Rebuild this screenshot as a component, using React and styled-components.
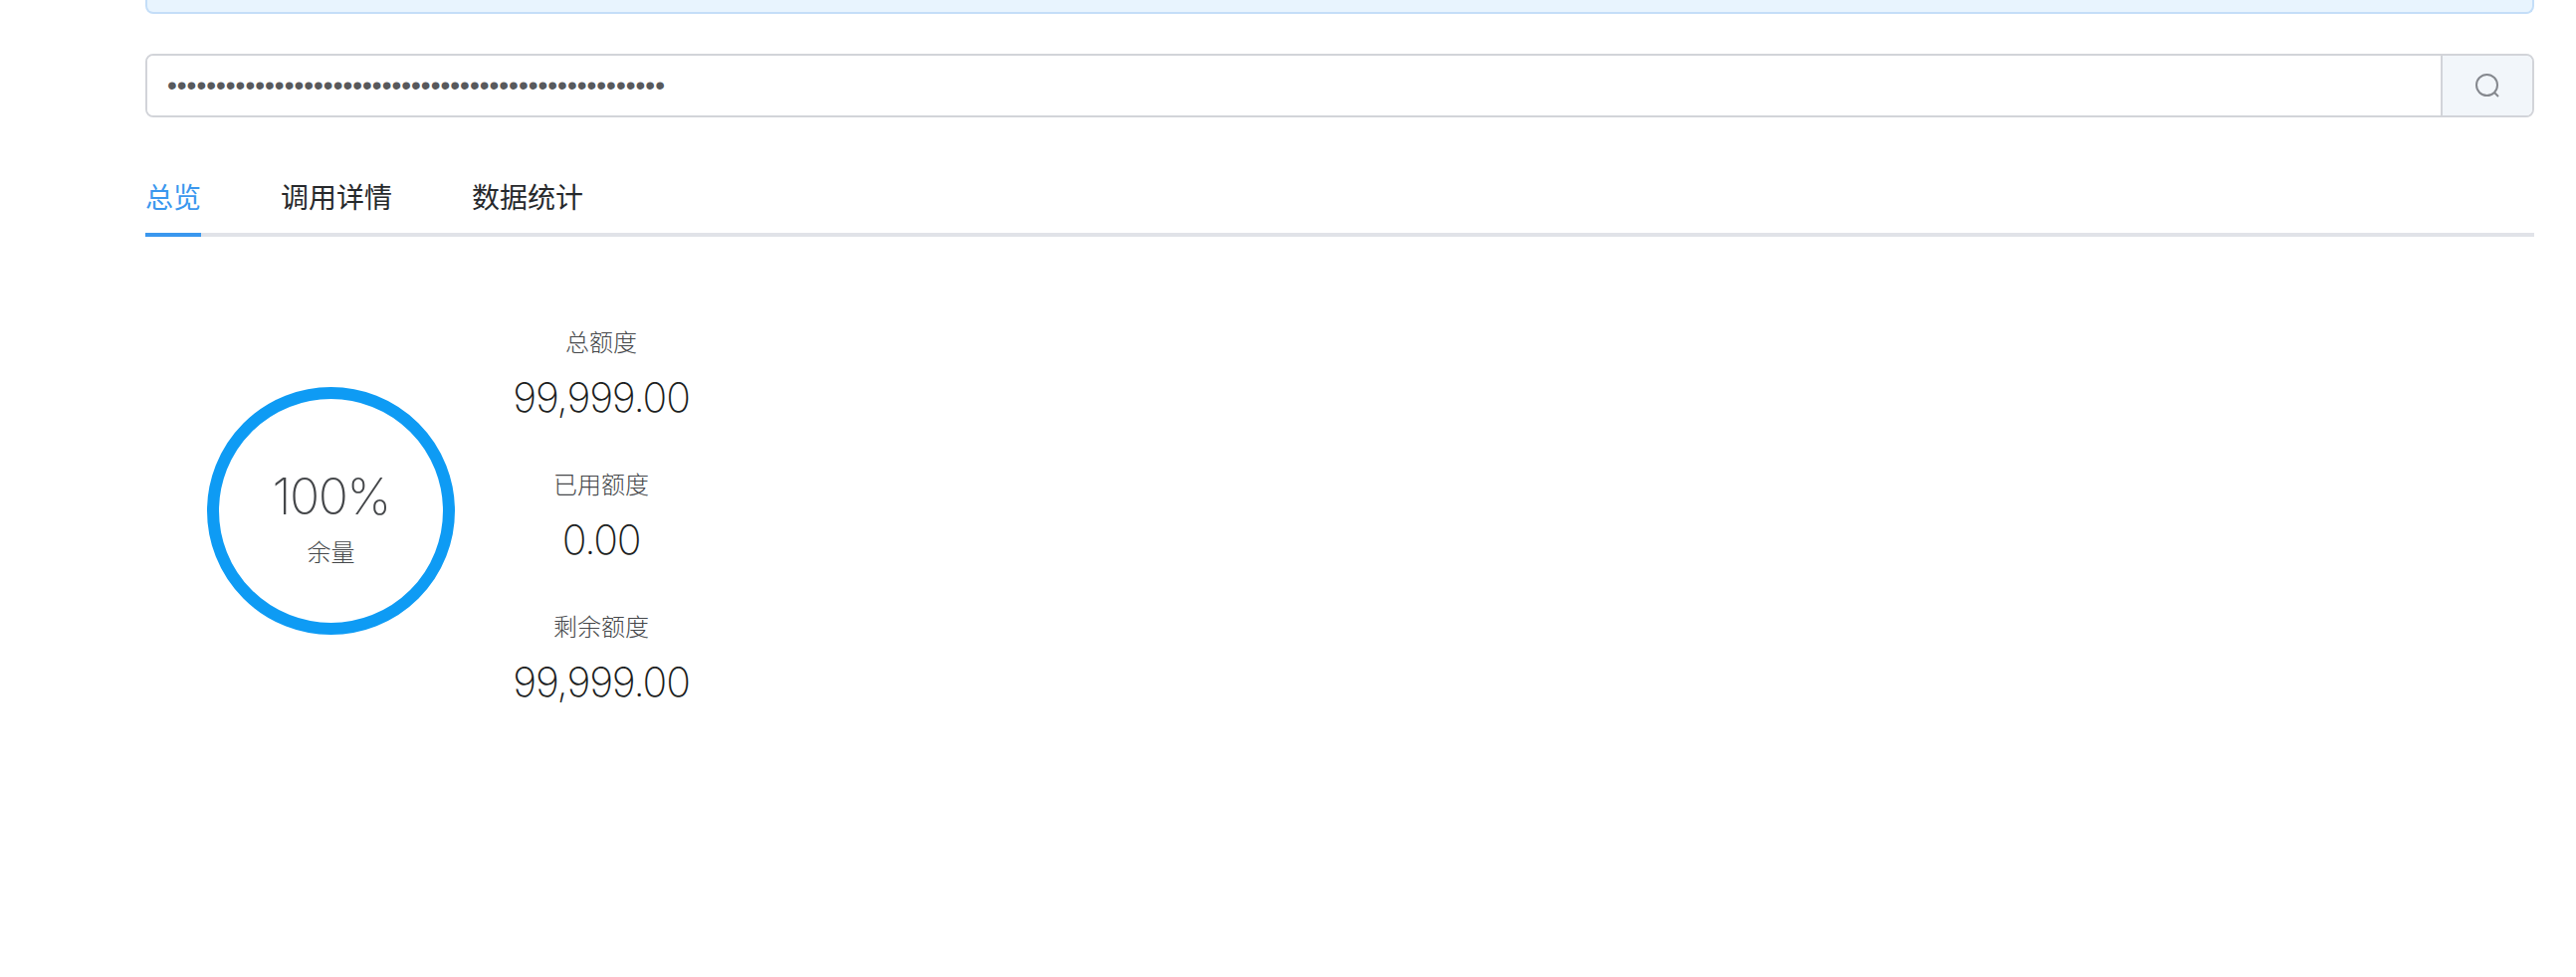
import React from "react";
import styled, { createGlobalStyle } from "styled-components";

const Global = createGlobalStyle`
  html, body { margin: 0; padding: 0; background: #fff; }
  body { font-family: Inter, "Noto Sans CJK SC", sans-serif; overflow: hidden; }
`;

const Page = styled.div`
  box-sizing: border-box;
  width: 2588px;
  height: 982px;
  padding: 0 42px 0 146px;
  display: flex;
  flex-direction: column;
`;

const Notice = styled.div`
  height: 14px;
  box-sizing: border-box;
  background: #e8f4fe;
  border: 2px solid #c4def8;
  border-top: none;
  border-radius: 0 0 8px 8px;
`;

const SearchBar = styled.div`
  margin-top: 40px;
  height: 64px;
  box-sizing: border-box;
  display: flex;
  border: 2px solid #d2d4d9;
  border-radius: 8px;
  overflow: hidden;
`;

const KeyInput = styled.input`
  flex: 1;
  min-width: 0;
  border: none;
  outline: none;
  padding: 0 20px;
  font-family: "Liberation Sans", sans-serif;
  font-size: 28px;
  color: #58595c;
  background: #fff;
`;

const SearchButton = styled.div`
  width: 90px;
  display: flex;
  align-items: center;
  justify-content: center;
  background: #f2f6fa;
  border-left: 2px solid #d2d4d9;
  color: #85888e;
`;

const TabBar = styled.div`
  margin-top: 50px;
  height: 70px;
  box-sizing: border-box;
  display: flex;
  gap: 80px;
  border-bottom: 4px solid #e1e3e8;
`;

const Tab = styled.div`
  position: relative;
  font-family: "Noto Sans CJK SC", sans-serif;
  font-size: 28px;
  font-weight: 400;
  line-height: 58px;
  color: ${(p) => (p.$active ? "#3a97ee" : "#26282b")};
  &::after {
    content: "";
    display: ${(p) => (p.$active ? "block" : "none")};
    position: absolute;
    left: 0;
    right: 0;
    bottom: -4px;
    height: 4px;
    background: #3a97ee;
  }
`;

const Overview = styled.div`
  display: flex;
  align-items: flex-start;
  padding: 85px 0 0 62px;
`;

const Gauge = styled.div`
  position: relative;
  margin-top: 66px;
  width: 249px;
  height: 249px;
  flex: none;
`;

const GaugeText = styled.div`
  position: absolute;
  inset: 0;
  padding-top: 12px;
  display: flex;
  flex-direction: column;
  align-items: center;
  justify-content: center;
`;

const Percent = styled.div`
  font-weight: 200;
  font-size: 50px;
  letter-spacing: -1.5px;
  line-height: 60px;
  color: #45474a;
`;

const GaugeLabel = styled.div`
  font-family: "Noto Sans CJK SC", sans-serif;
  font-weight: 300;
  font-size: 24px;
  line-height: 34px;
  margin-top: 8px;
  color: #45474a;
`;

const Stats = styled.div`
  margin-left: 50px;
  display: flex;
  flex-direction: column;
  gap: 31px;
`;

const Stat = styled.div`
  width: 194px;
  display: flex;
  flex-direction: column;
  align-items: center;
`;

const StatLabel = styled.div`
  font-family: "Noto Sans CJK SC", sans-serif;
  font-weight: 300;
  font-size: 24px;
  line-height: 40px;
  color: #45474a;
`;

const StatValue = styled.div`
  font-weight: 200;
  font-size: 41px;
  letter-spacing: -1.2px;
  line-height: 72px;
  color: #1c1e21;
`;

const stats = [
  ["总额度", "99,999.00"],
  ["已用额度", "0.00"],
  ["剩余额度", "99,999.00"],
];

export default function App() {
  return (
    <Page>
      <Global />
      <Notice />
      <SearchBar>
        <KeyInput type="password" readOnly value={"x".repeat(51)} />
        <SearchButton>
          <svg width="28" height="28" viewBox="0 0 28 28" fill="none" stroke="currentColor" strokeWidth="2">
            <circle cx="13.5" cy="13.5" r="10.5" />
            <path d="M21 21l4 4" />
          </svg>
        </SearchButton>
      </SearchBar>
      <TabBar>
        <Tab $active>总览</Tab>
        <Tab>调用详情</Tab>
        <Tab>数据统计</Tab>
      </TabBar>
      <Overview>
        <Gauge>
          <svg width="249" height="249" viewBox="0 0 249 249">
            <circle cx="124.5" cy="124.5" r="118.5" fill="none" stroke="#0e9bf4" strokeWidth="12" />
          </svg>
          <GaugeText>
            <Percent>100%</Percent>
            <GaugeLabel>余量</GaugeLabel>
          </GaugeText>
        </Gauge>
        <Stats>
          {stats.map(([label, value]) => (
            <Stat key={label}>
              <StatLabel>{label}</StatLabel>
              <StatValue>{value}</StatValue>
            </Stat>
          ))}
        </Stats>
      </Overview>
    </Page>
  );
}
